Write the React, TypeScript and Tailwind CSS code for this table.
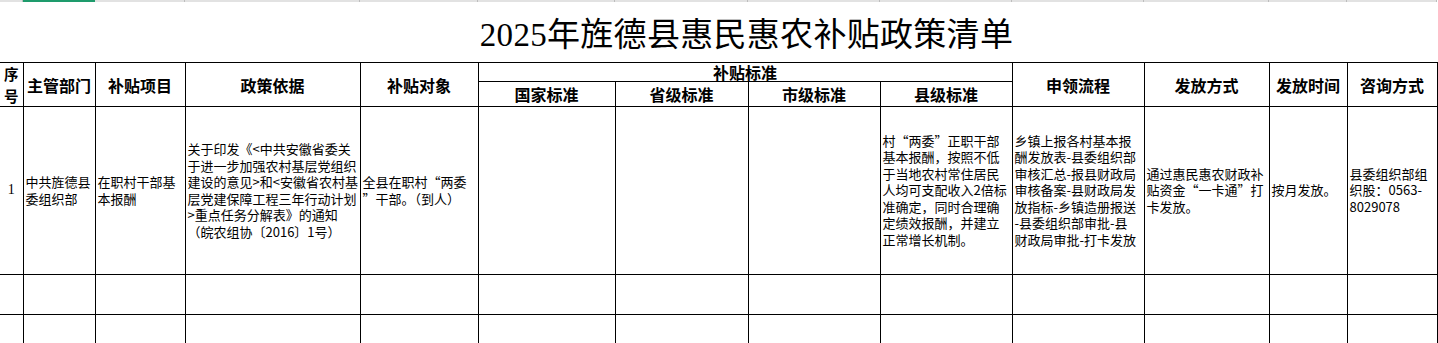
import React from "react";

const widths = [23, 72, 90, 175, 118, 137, 133, 132, 132, 132, 125, 78, 90];

const cjk = { fontFamily: '"Noto Sans CJK SC", "Noto Sans", sans-serif' };

const row: string[][] = [
  [],
  ["中共旌德县", "委组织部"],
  ["在职村干部基", "本报酬"],
  [
    "关于印发《<中共安徽省委关",
    "于进一步加强农村基层党组织",
    "建设的意见>和<安徽省农村基",
    "层党建保障工程三年行动计划",
    ">重点任务分解表》的通知",
    "（皖农组协〔2016〕1号）",
  ],
  ["全县在职村“两委", "”干部。（到人）"],
  [],
  [],
  [],
  [
    "村“两委”正职干部",
    "基本报酬，按照不低",
    "于当地农村常住居民",
    "人均可支配收入2倍标",
    "准确定，同时合理确",
    "定绩效报酬，并建立",
    "正常增长机制。",
  ],
  [
    "乡镇上报各村基本报",
    "酬发放表-县委组织部",
    "审核汇总-报县财政局",
    "审核备案-县财政局发",
    "放指标-乡镇造册报送",
    "-县委组织部审批-县",
    "财政局审批-打卡发放",
  ],
  ["通过惠民惠农财政补", "贴资金“一卡通”打", "卡发放。"],
  ["按月发放。"],
  ["县委组织部组", "织股：0563-", "8029078"],
];

function Lines({ lines }: { lines: string[] }) {
  return (
    <>
      {lines.map((l) => (
        <div key={l} className="whitespace-nowrap">
          {l}
        </div>
      ))}
    </>
  );
}

export default function App() {
  const cell = "border border-black p-0";
  return (
    <div className="w-[1438px] h-[343px] overflow-hidden bg-white text-black" style={cjk}>
      {/* sheet column strip */}
      <div className="flex h-[2px]">
        {widths.map((w, i) => (
          <div
            key={i}
            className={i === 1 ? "h-full bg-[#1e9b6c]" : "h-full bg-[#e2e2e2] border-r border-[#bdbdbd]"}
            style={{ width: w }}
          />
        ))}
      </div>

      <div className="h-[60px] flex items-center justify-center pl-[55px] pt-[6px]">
        <h1
          className="text-[33px] leading-none tracking-[0.3px]"
          style={{ fontFamily: '"Liberation Serif", "Noto Sans CJK SC", serif' }}
        >
          2025年旌德县惠民惠农补贴政策清单
        </h1>
      </div>

      <table className="table-fixed border-collapse w-[1437px]">
        <colgroup>
          {widths.map((w, i) => (
            <col key={i} style={{ width: w }} />
          ))}
        </colgroup>
        <tbody>
          <tr className="h-[18px] text-[16px] font-bold leading-[18px]">
            <td rowSpan={2} className={`${cell} border-l-0 text-center text-[14.5px] leading-[21.5px]`}>
              <div>序</div>
              <div>号</div>
            </td>
            <td rowSpan={2} className={`${cell} text-center whitespace-nowrap`}>主管部门</td>
            <td rowSpan={2} className={`${cell} text-center`}>补贴项目</td>
            <td rowSpan={2} className={`${cell} text-center`}>政策依据</td>
            <td rowSpan={2} className={`${cell} text-center`}>补贴对象</td>
            <td colSpan={4} className={`${cell} text-center align-bottom`}>补贴标准</td>
            <td rowSpan={2} className={`${cell} text-center`}>申领流程</td>
            <td rowSpan={2} className={`${cell} text-center`}>发放方式</td>
            <td rowSpan={2} className={`${cell} text-center`}>发放时间</td>
            <td rowSpan={2} className={`${cell} text-center`}>咨询方式</td>
          </tr>
          <tr className="h-[25px] text-[16px] font-bold leading-[20px]">
            <td className={`${cell} text-center`}>国家标准</td>
            <td className={`${cell} text-center`}>省级标准</td>
            <td className={`${cell} text-center`}>市级标准</td>
            <td className={`${cell} text-center`}>县级标准</td>
          </tr>
          <tr className="h-[168px] text-[13px] leading-[16.5px]">
            <td
              className={`${cell} border-l-0 text-center text-[14px]`}
              style={{ fontFamily: '"Liberation Serif", serif' }}
            >
              1
            </td>
            {row.slice(1).map((lines, i) => (
              <td key={i} className={`${cell} px-[2px]`}>
                <Lines lines={lines} />
              </td>
            ))}
          </tr>
          {[0, 1].map((r) => (
            <tr key={r} className="h-[40px]">
              {widths.map((_, i) => (
                <td key={i} className={`${cell} ${i === 0 ? "border-l-0" : ""}`} />
              ))}
            </tr>
          ))}
        </tbody>
      </table>
    </div>
  );
}
